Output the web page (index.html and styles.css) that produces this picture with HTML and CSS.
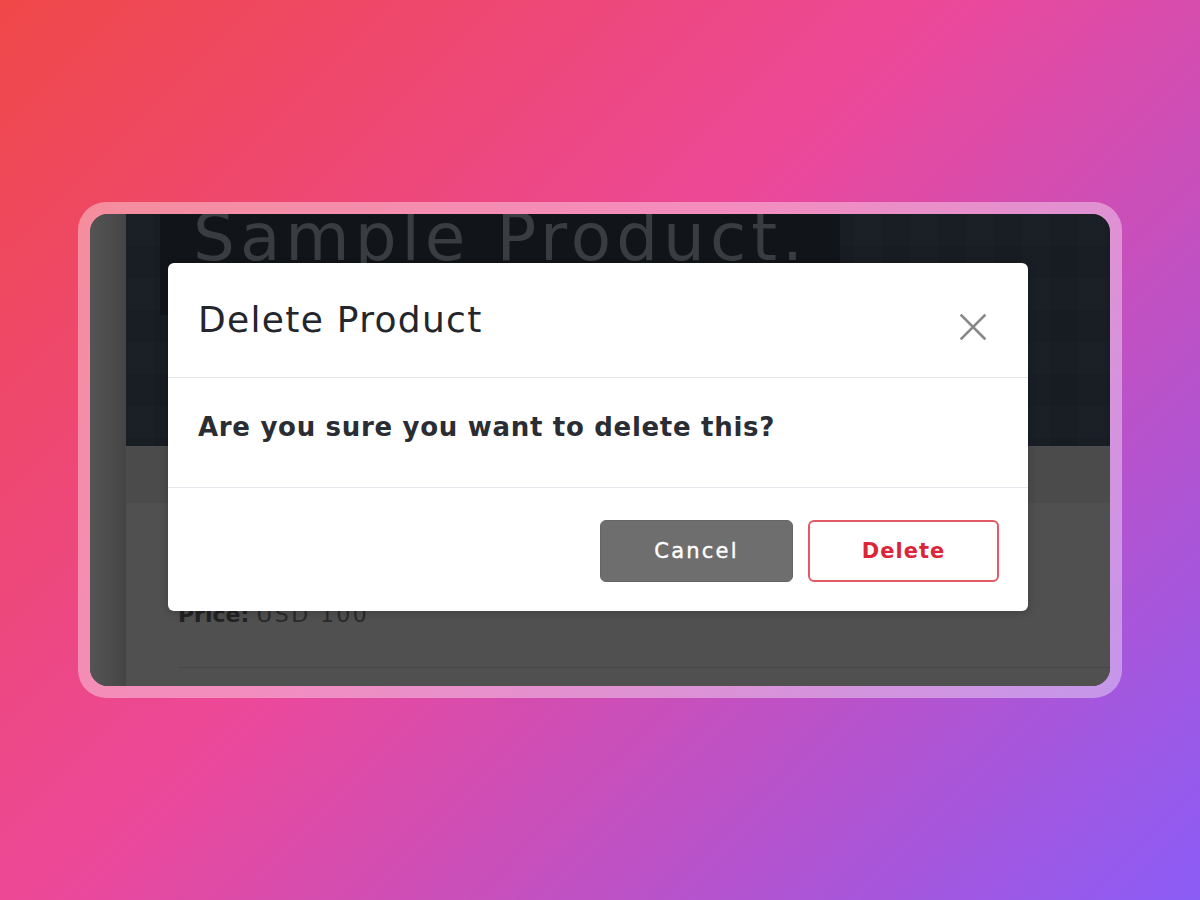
FILE: index.html
```html
<!DOCTYPE html>
<html lang="en">
<head>
<meta charset="utf-8">
<title>Delete Product</title>
<link rel="stylesheet" href="styles.css">
</head>
<body>
<div class="frame">
  <div class="screen">
    <div class="page">
      <div class="side"></div>
      <div class="main">
        <div class="hero">
          <div class="hero-box"><span class="hero-title">Sample Product.</span></div>
          <div class="hero-rest"></div>
        </div>
        <div class="content">
          <div class="card">
            <div class="price"><b>Price:</b> <span class="price-val">USD 100</span></div>
            <div class="card-line"></div>
          </div>
        </div>
      </div>
    </div>
    <div class="modal">
      <div class="modal-header">
        <h2 class="modal-title">Delete Product</h2>
        <button class="close" aria-label="Close">
          <svg width="26" height="26" viewBox="0 0 26 26"><path d="M1.5 1.5 L24.5 24.5 M24.5 1.5 L1.5 24.5" stroke="#888" stroke-width="2.6" stroke-linecap="square" fill="none"/></svg>
        </button>
      </div>
      <div class="modal-body">Are you sure you want to delete this?</div>
      <div class="modal-footer">
        <button class="btn btn-cancel">Cancel</button>
        <button class="btn btn-delete">Delete</button>
      </div>
    </div>
  </div>
</div>
</body>
</html>
```
FILE: styles.css
```css
html, body {
  margin: 0;
  padding: 0;
}
body {
  width: 1200px;
  height: 900px;
  background: linear-gradient(135deg, #f04848 0%, #ec4899 45%, #8b5cf6 100%);
  display: flex;
  align-items: center;
  justify-content: center;
  font-family: "DejaVu Sans", "Liberation Sans", sans-serif;
}
.frame {
  width: 1020px;
  height: 472px;
  padding: 12px;
  border-radius: 28px;
  background: rgba(255, 255, 255, 0.38);
}
.screen {
  position: relative;
  width: 1020px;
  height: 472px;
  border-radius: 18px;
  overflow: hidden;
  background: #4b4b4b;
}
.page {
  display: flex;
  height: 100%;
}
.side {
  width: 36px;
  flex: none;
  background: linear-gradient(to right, #545454, #4a4a4a 70%, #444 100%);
}
.main {
  flex: 1;
  display: flex;
  flex-direction: column;
}
.hero {
  height: 232px;
  flex: none;
  display: flex;
  background: #171c23;
  background-image:
    repeating-linear-gradient(to right, rgba(255,255,255,0.008) 0 28px, rgba(0,0,0,0.012) 28px 56px),
    repeating-linear-gradient(to bottom, rgba(255,255,255,0.006) 0 32px, rgba(0,0,0,0.012) 32px 64px);
}
.hero-box {
  margin-left: 34px;
  width: 680px;
  height: 101px;
  background: #111419;
  overflow: hidden;
  position: relative;
}
.hero-title {
  position: absolute;
  left: 33px;
  top: -15px;
  font-family: "DejaVu Sans", sans-serif;
  font-size: 66px;
  font-weight: 400;
  color: #393c40;
  white-space: nowrap;
  letter-spacing: 5px;
}
.hero-rest {
  flex: 1;
}
.content {
  flex: 1;
  padding-top: 57px;
  display: flex;
}
.card {
  flex: 1;
  background: #505050;
  padding: 98px 0 0 52px;
}
.price {
  font-size: 22px;
  color: #222;
  line-height: 28px;
}
.price b {
  font-weight: 700;
}
.price-val {
  letter-spacing: 2.4px;
  color: #2a2a2a;
}
.card-line {
  margin-top: 38px;
  height: 1px;
  background: #474747;
}
.modal {
  position: absolute;
  left: 78px;
  top: 49px;
  width: 860px;
  height: 348px;
  background: #fff;
  border-radius: 6px;
  display: flex;
  flex-direction: column;
  box-shadow: 0 2px 8px rgba(0,0,0,0.2);
}
.modal-header {
  height: 114px;
  border-bottom: 1px solid #e4e7eb;
  display: flex;
  align-items: center;
  justify-content: space-between;
  padding: 0 30px;
}
.modal-title {
  margin: 0;
  margin-top: -2px;
  font-size: 36px;
  font-weight: 400;
  color: #23262c;
  letter-spacing: 1.3px;
}
.close {
  border: 0;
  background: none;
  padding: 0;
  width: 26px;
  height: 26px;
  margin-right: 12px;
  margin-top: 14px;
  display: flex;
}
.modal-body {
  height: 110px;
  border-bottom: 1px solid #e4e7eb;
  padding: 0 30px;
  display: flex;
  align-items: center;
  font-size: 26px;
  font-weight: 700;
  color: #2a2d33;
  letter-spacing: 0.7px;
  padding-bottom: 12px;
  box-sizing: border-box;
}
.modal-footer {
  flex: 1;
  display: flex;
  justify-content: flex-end;
  align-items: center;
  gap: 15px;
  padding: 2px 29px 0;
}
.btn {
  width: 193px;
  height: 62px;
  border-radius: 6px;
  font-family: "DejaVu Sans", sans-serif;
  font-size: 21px;
  box-sizing: border-box;
}
.btn-cancel {
  background: #6e6e6e;
  color: #fff;
  border: 1px solid #666;
  font-weight: 400;
  letter-spacing: 2.2px;
  -webkit-text-stroke: 0.4px #fff;
}
.btn-delete {
  width: 191px;
  background: #fff;
  color: #dc2637;
  border: 2px solid #e35a67;
  font-weight: 700;
  letter-spacing: 1px;
}
```
